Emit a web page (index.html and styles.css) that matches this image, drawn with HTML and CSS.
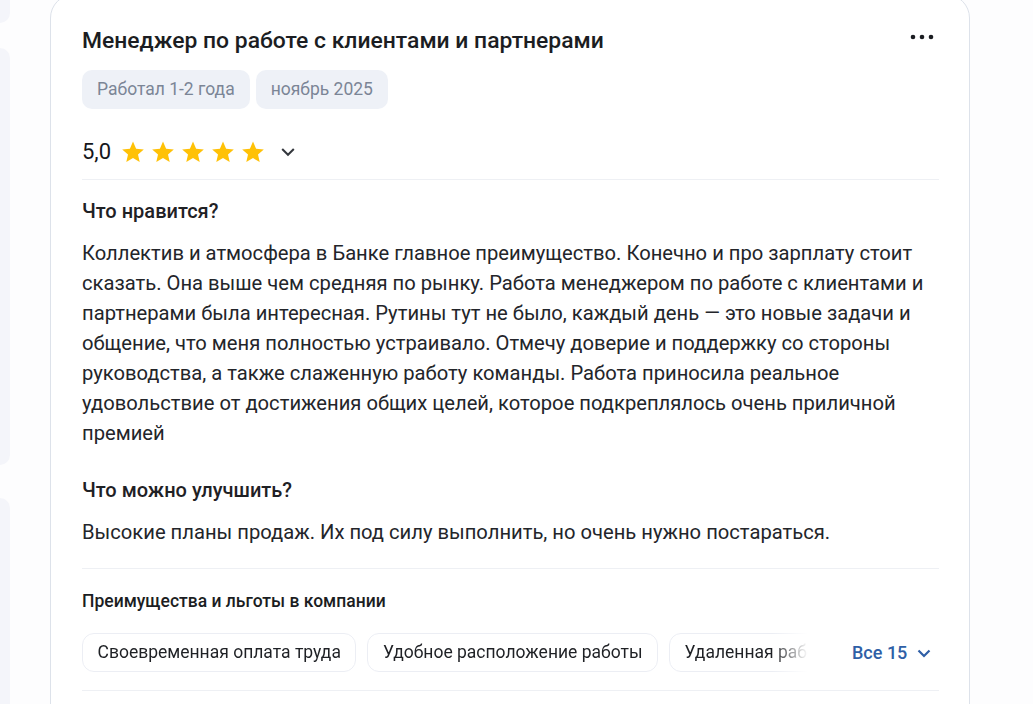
FILE: index.html
```html
<!DOCTYPE html>
<html lang="ru">
<head>
<meta charset="utf-8">
<link rel="stylesheet" href="styles.css">
</head>
<body>
<div class="page">
  <div class="side">
    <div class="side-card c1"></div>
    <div class="side-card c2"></div>
    <div class="side-card c3"></div>
  </div>
  <article class="review">
    <header class="head">
      <h2 class="title">Менеджер по работе с клиентами и партнерами</h2>
      <button class="more" aria-label="Ещё">
        <svg width="24" height="6" viewBox="0 0 24 6"><circle cx="3" cy="3" r="2.3" fill="#1b1d22"/><circle cx="12" cy="3" r="2.3" fill="#1b1d22"/><circle cx="21" cy="3" r="2.3" fill="#1b1d22"/></svg>
      </button>
    </header>
    <div class="tags">
      <span class="tag">Работал 1-2 года</span>
      <span class="tag">ноябрь 2025</span>
    </div>
    <div class="rating">
      <span class="score">5,0</span>
      <span class="stars">
        <svg class="star" viewBox="0 0 24 24"><path d="M12 1.6l3.1 7.1 7.7.7-5.8 5.1 1.7 7.6L12 18.1l-6.7 4 1.7-7.6-5.8-5.1 7.7-.7z" fill="#ffc107"/></svg>
        <svg class="star" viewBox="0 0 24 24"><path d="M12 1.6l3.1 7.1 7.7.7-5.8 5.1 1.7 7.6L12 18.1l-6.7 4 1.7-7.6-5.8-5.1 7.7-.7z" fill="#ffc107"/></svg>
        <svg class="star" viewBox="0 0 24 24"><path d="M12 1.6l3.1 7.1 7.7.7-5.8 5.1 1.7 7.6L12 18.1l-6.7 4 1.7-7.6-5.8-5.1 7.7-.7z" fill="#ffc107"/></svg>
        <svg class="star" viewBox="0 0 24 24"><path d="M12 1.6l3.1 7.1 7.7.7-5.8 5.1 1.7 7.6L12 18.1l-6.7 4 1.7-7.6-5.8-5.1 7.7-.7z" fill="#ffc107"/></svg>
        <svg class="star" viewBox="0 0 24 24"><path d="M12 1.6l3.1 7.1 7.7.7-5.8 5.1 1.7 7.6L12 18.1l-6.7 4 1.7-7.6-5.8-5.1 7.7-.7z" fill="#ffc107"/></svg>
      </span>
      <svg class="chev" width="16" height="16" viewBox="0 0 16 16"><path d="M2.2 5l5.8 5.8L13.8 5" fill="none" stroke="#34373d" stroke-width="2"/></svg>
    </div>
    <section class="block">
      <h3 class="q">Что нравится?</h3>
      <p class="a">Коллектив и атмосфера в Банке главное преимущество. Конечно и про зарплату стоит сказать. Она выше чем средняя по рынку. Работа менеджером по работе с клиентами и партнерами была интересная. Рутины тут не было, каждый день — это новые задачи и общение, что меня полностью устраивало. Отмечу доверие и поддержку со стороны руководства, а также слаженную работу команды. Работа приносила реальное удовольствие от достижения общих целей, которое подкреплялось очень приличной премией</p>
      <h3 class="q q2">Что можно улучшить?</h3>
      <p class="a">Высокие планы продаж. Их под силу выполнить, но очень нужно постараться.</p>
    </section>
    <section class="perks">
      <h4 class="perks-title">Преимущества и льготы в компании</h4>
      <div class="perks-row">
        <div class="chips">
          <span class="chip">Своевременная оплата труда</span>
          <span class="chip">Удобное расположение работы</span>
          <span class="chip">Удаленная работа</span>
        </div>
        <button class="all">Все 15
          <svg width="16" height="16" viewBox="0 0 16 16"><path d="M2.5 5.5l5.5 5.5 5.5-5.5" fill="none" stroke="#2f5fa6" stroke-width="2.2"/></svg>
        </button>
      </div>
    </section>
  </article>
</div>
</body>
</html>
```
FILE: styles.css
```css
* { box-sizing: border-box; }
html, body { margin: 0; padding: 0; }
body {
  background: #fdfdfe;
  font-family: Roboto, "Noto Sans", sans-serif;
  color: #1f2125;
  overflow: hidden;
  height: 704px;
}
.page {
  display: flex;
  align-items: flex-start;
  gap: 40px;
}
.side {
  width: 10px;
  display: flex;
  flex-direction: column;
  margin-top: -60px;
}
.side-card {
  background: #f4f5fa;
  border-radius: 0 12px 12px 0;
}
.c1 { height: 83px; }
.c2 { height: 417px; margin-top: 25px; }
.c3 { height: 400px; margin-top: 33px; }

.review {
  width: 920px;
  margin-top: -6px;
  background: #fff;
  border: 1px solid #dde2ea;
  border-radius: 24px;
  padding: 22px 30px 0 31px;
  min-height: 760px;
}
.head {
  display: flex;
  align-items: center;
  justify-content: space-between;
  height: 42px;
  margin-top: 2px;
}
.title {
  margin: 0;
  font-size: 22.9px;
  font-weight: 500;
  color: #1b1d22;
}
.more {
  border: 0;
  background: none;
  padding: 0;
  margin-right: 5px;
  display: flex;
  margin-top: -6px;
}
.tags {
  display: flex;
  gap: 6px;
  margin-top: 9px;
}
.tag {
  background: #eef1f7;
  color: #7b8596;
  font-size: 17.5px;
  height: 39px;
  line-height: 39px;
  padding: 0 15px;
  border-radius: 10px;
}
.rating {
  display: flex;
  align-items: center;
  margin-top: 21px;
  border-bottom: 1px solid #eef0f4;
  padding-bottom: 6px;
  height: 50px;
}
.score {
  font-size: 22px;
  font-weight: 400;
  color: #15171b;
  margin-right: 10px;
}
.stars { display: flex; gap: 6px; }
.star { width: 24px; height: 24px; }
.chev { margin-left: 15px; }
.block { padding-top: 19px; }
.q {
  margin: 0;
  font-size: 20px;
  font-weight: 500;
  line-height: 24px;
  color: #1f2125;
}
.q2 { margin-top: 30px; }
.a {
  margin: 15px 0 0;
  font-size: 20.2px;
  line-height: 30px;
  color: #23252a;
}
.perks {
  border-top: 1px solid #eef0f4;
  margin-top: 21px;
  padding-top: 22px;
}
.perks-title {
  margin: 0;
  font-size: 17.5px;
  font-weight: 500;
  line-height: 20px;
  color: #1b1d22;
}
.perks-row {
  display: flex;
  align-items: center;
  margin-top: 22px;
  padding-bottom: 18px;
  border-bottom: 1px solid #eef0f4;
}
.chips {
  display: flex;
  gap: 11px;
  width: 726px;
  overflow: hidden;
  white-space: nowrap;
  -webkit-mask-image: linear-gradient(to right, #000 690px, transparent 726px);
  mask-image: linear-gradient(to right, #000 690px, transparent 726px);
}
.chip {
  flex: none;
  height: 39px;
  line-height: 37px;
  padding: 0 14.5px;
  border: 1px solid #eceef4;
  border-radius: 12px;
  font-size: 17.5px;
  color: #1f2125;
}
.all {
  margin-left: 44px;
  border: 0;
  background: none;
  padding: 0;
  font-family: inherit;
  font-size: 18px;
  font-weight: 500;
  color: #2f5fa6;
  display: flex;
  align-items: center;
  gap: 9px;
}
```
